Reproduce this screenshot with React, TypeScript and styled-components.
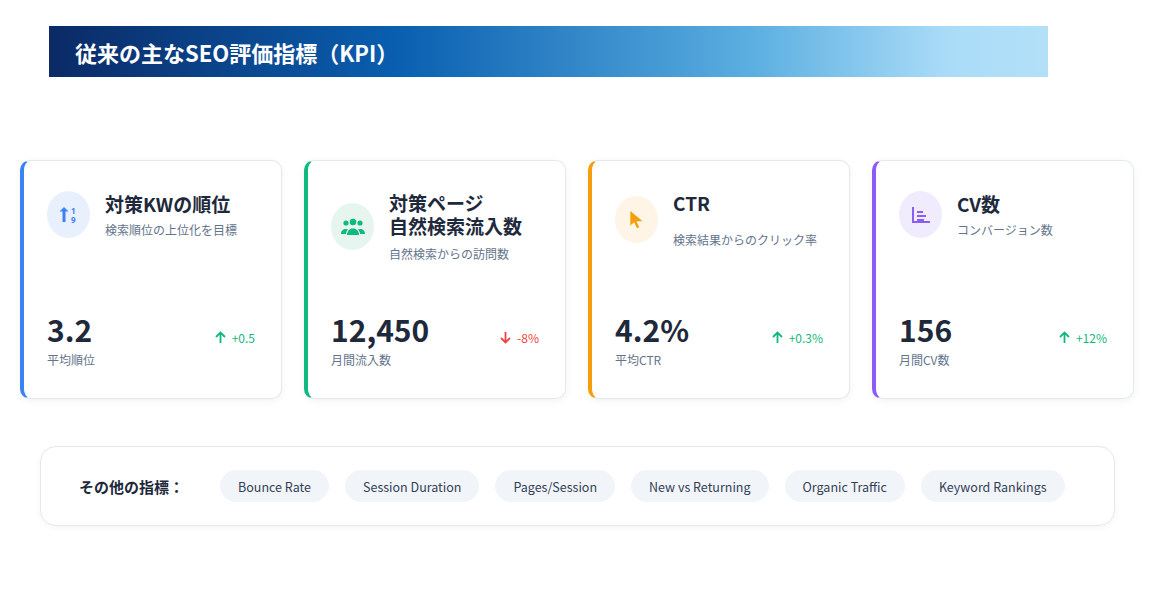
import React from "react";
import styled, { createGlobalStyle } from "styled-components";

const G = createGlobalStyle`
  body { margin: 0; background: #fff; font-family: "Noto Sans CJK JP", "Noto Sans", sans-serif; color: #1e293b; }
`;
const Page = styled.div`width:1155px;height:615px;position:relative;padding-top:26px;box-sizing:border-box;`;
const Banner = styled.div`
  margin-left:49px;width:999px;height:51px;box-sizing:border-box;padding-left:26px;
  display:flex;align-items:center;color:#fff;font-size:22px;font-weight:700;
  background:linear-gradient(90deg,#0b2a66 0%,#0a5fb0 35%,#5aaee0 70%,#aadcf8 90%,#b2e0f8 100%);
`;
const Cards = styled.div`display:flex;gap:22px;margin:83px 0 0 20px;`;
const Card = styled.div<{ $c: string }>`
  width:262px;height:239px;box-sizing:border-box;background:#fff;border:1px solid #e2e8f0;border-left:4px solid ${p => p.$c};
  border-radius:10px;box-shadow:0 2px 8px rgba(0,0,0,0.05);padding:0 26px 0 23px;display:flex;flex-direction:column;
`;
const Head = styled.div`display:flex;align-items:center;gap:15px;padding-top:30px;`;
const Icon = styled.div<{ $bg: string }>`width:43px;height:47px;border-radius:50%;background:${p => p.$bg};display:flex;align-items:center;justify-content:center;flex-shrink:0;`;
const Texts = styled.div`display:flex;flex-direction:column;`;
const Title = styled.div`font-size:19px;font-weight:700;line-height:23px;color:#1e293b;`;
const Sub = styled.div<{ $gap: number }>`font-size:12px;color:#64748b;margin-top:${p => p.$gap}px;`;
const Bottom = styled.div`margin-top:auto;padding-bottom:30px;display:flex;justify-content:space-between;align-items:flex-end;`;
const Val = styled.div`font-size:30px;font-weight:700;line-height:36px;`;
const ValL = styled.div`font-size:12px;color:#64748b;margin-top:4px;`;
const Delta = styled.div<{ $c: string }>`font-size:12px;color:${p => p.$c};display:flex;align-items:center;gap:6px;margin-bottom:22px;`;
const Panel = styled.div`
  margin:47px 0 0 40px;width:1075px;height:80px;box-sizing:border-box;border:1px solid #e2e8f0;border-radius:16px;
  display:flex;align-items:center;padding-left:38px;gap:16px;box-shadow:0 2px 6px rgba(0,0,0,0.04);
`;
const PLabel = styled.div`font-size:15px;font-weight:700;margin-right:20px;`;
const Chip = styled.div`background:#f1f5f9;border-radius:16px;height:32px;padding:0 18px;display:flex;align-items:center;font-size:12.5px;color:#334155;`;

const Up = () => <svg width="11" height="13" viewBox="0 0 11 13"><path d="M5.5 12V1.5M1 6l4.5-4.5L10 6" stroke="#10b981" strokeWidth="1.8" fill="none"/></svg>;
const Down = () => <svg width="11" height="13" viewBox="0 0 11 13"><path d="M5.5 1v10.5M1 7l4.5 4.5L10 7" stroke="#ef4444" strokeWidth="1.8" fill="none"/></svg>;

const data = [
  { c: "#3b82f6", bg: "#e8f0fe", t: ["対策KWの順位"], s: "検索順位の上位化を目標", g: 6, v: "3.2", l: "平均順位", d: "+0.5", up: true,
    i: <svg width="22" height="22" viewBox="0 0 22 22" fill="#3b82f6"><path d="M6 3l4.5 4.5H7.5V18h-3V7.5H1.5z"/><text x="13" y="10" fontSize="8" fontWeight="700" fontFamily="Noto Sans">1</text><text x="13" y="18.5" fontSize="8" fontWeight="700" fontFamily="Noto Sans">9</text></svg> },
  { c: "#10b981", bg: "#e6f6ef", t: ["対策ページ", "自然検索流入数"], s: "自然検索からの訪問数", g: 8, v: "12,450", l: "月間流入数", d: "-8%", up: false,
    i: <svg width="24" height="20" viewBox="0 0 24 20" fill="#10b981"><circle cx="12" cy="5" r="3.3"/><circle cx="5" cy="6" r="2.6"/><circle cx="19" cy="6" r="2.6"/><path d="M6 18c0-4 2.5-6.5 6-6.5s6 2.5 6 6.5z"/><path d="M0 17c0-3 2-5 5-5 1 0 1.6.2 2 .5C5.5 14 5 15.5 5 17z"/><path d="M24 17c0-3-2-5-5-5-1 0-1.6.2-2 .5 1.5 1.5 2 3 2 4.5z"/></svg> },
  { c: "#f59e0b", bg: "#fef5e7", t: ["CTR"], s: "検索結果からのクリック率", g: 17, v: "4.2%", l: "平均CTR", d: "+0.3%", up: true,
    i: <svg width="16" height="20" viewBox="0 0 14 18" fill="#f59e0b"><path d="M1 1v13l3.5-3 2.5 5.5 2-1-2.5-5.3H12z"/></svg> },
  { c: "#8b5cf6", bg: "#f0ecfd", t: ["CV数"], s: "コンバージョン数", g: 6, v: "156", l: "月間CV数", d: "+12%", up: true,
    i: <svg width="20" height="18" viewBox="0 0 20 18" fill="none" stroke="#8b5cf6" strokeWidth="2"><path d="M2 1v15h17M6 6h6M6 10h9M6 14h7"/></svg> },
];

export default function App() {
  return (
    <Page>
      <G />
      <Banner>従来の主なSEO評価指標（KPI）</Banner>
      <Cards>
        {data.map((d, k) => (
          <Card key={k} $c={d.c}>
            <Head>
              <Icon $bg={d.bg}>{d.i}</Icon>
              <Texts>
                {d.t.map(x => <Title key={x}>{x}</Title>)}
                <Sub $gap={d.g}>{d.s}</Sub>
              </Texts>
            </Head>
            <Bottom>
              <div><Val>{d.v}</Val><ValL>{d.l}</ValL></div>
              <Delta $c={d.up ? "#10b981" : "#ef4444"}>{d.up ? <Up /> : <Down />}{d.d}</Delta>
            </Bottom>
          </Card>
        ))}
      </Cards>
      <Panel>
        <PLabel>その他の指標：</PLabel>
        {["Bounce Rate", "Session Duration", "Pages/Session", "New vs Returning", "Organic Traffic", "Keyword Rankings"].map(x => <Chip key={x}>{x}</Chip>)}
      </Panel>
    </Page>
  );
}
